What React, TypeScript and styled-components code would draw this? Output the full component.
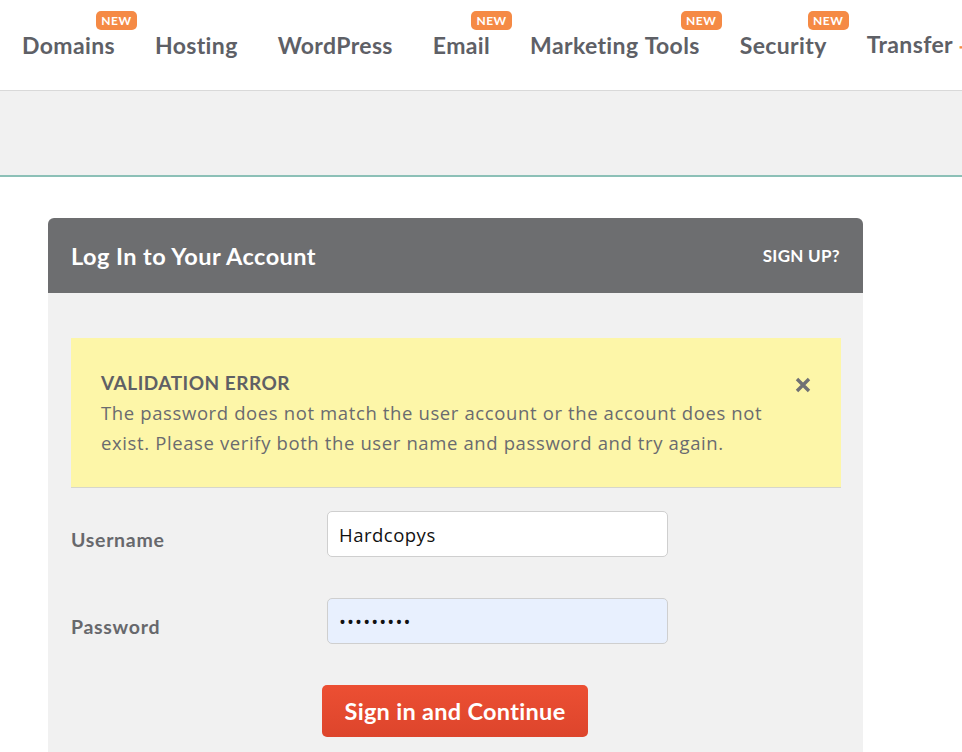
import React from "react";
import styled, { createGlobalStyle } from "styled-components";

const Global = createGlobalStyle`
  html, body { margin: 0; padding: 0; background: #ffffff; overflow: hidden; }
  body { font-family: "Lato", "Noto Sans", sans-serif; width: 962px; height: 752px; }
  * { box-sizing: border-box; }
`;

const Nav = styled.nav`
  height: 91px;
  border-bottom: 1px solid #d9d9d9;
  background: #fff;
  display: flex;
  align-items: center;
  gap: 40px;
  padding: 0 0 0 22px;
  white-space: nowrap;
  overflow: hidden;
`;

const NavItem = styled.a`
  position: relative;
  font-family: "Lato", sans-serif;
  font-size: 23px;
  font-weight: 700;
  letter-spacing: 0.36px;
  word-spacing: 1px;
  color: #5e6066;
  text-decoration: none;
  line-height: 28px;
  flex-shrink: 0;
`;

const Badge = styled.span`
  position: absolute;
  right: -22px;
  top: -20px;
  width: 41px;
  height: 19px;
  border-radius: 5px;
  background: #f58a45;
  color: #fff;
  font-size: 12px;
  font-weight: 700;
  letter-spacing: 0.5px;
  word-spacing: 0;
  line-height: 19px;
  text-align: center;
`;

const Arrow = styled.span`
  color: #f58a45;
  font-size: 18px;
  margin-left: 6px;
`;

const Band = styled.div`
  height: 86px;
  background: #f1f1f1;
  border-bottom: 2px solid #8cc0b7;
`;

const Main = styled.main`
  padding: 41px 0 0 48px;
`;

const Card = styled.section`
  width: 815px;
`;

const CardHeader = styled.header`
  height: 75px;
  background: #6d6e70;
  border-radius: 6px 6px 0 0;
  display: flex;
  align-items: center;
  justify-content: space-between;
  padding: 0 23px;
  color: #fff;
`;

const CardTitle = styled.h1`
  margin: 0;
  font-size: 23.5px;
  font-weight: 700;
  letter-spacing: 0.45px;
`;

const SignUp = styled.a`
  font-size: 17px;
  font-weight: 700;
  letter-spacing: 0.3px;
  color: #fff;
  text-decoration: none;
`;

const CardBody = styled.div`
  background: #f1f1f1;
  padding: 45px 22px 40px 23px;
  height: 480px;
`;

const Alert = styled.div`
  position: relative;
  background: #fdf6a8;
  border-bottom: 1px solid #d6d6cc;
  padding: 30px 40px 29px 30px;
  color: #5f6065;
`;

const AlertTitle = styled.div`
  font-size: 19px;
  font-weight: 700;
  letter-spacing: 0.5px;
  line-height: 30px;
`;

const AlertText = styled.p`
  margin: 0;
  font-family: "Open Sans", "Noto Sans", sans-serif;
  font-size: 18.5px;
  font-weight: 400;
  line-height: 30px;
  letter-spacing: 0.62px;
  color: #6a6b6f;
  white-space: nowrap;
`;

const Close = styled.button`
  position: absolute;
  right: 30px;
  top: 39px;
  width: 16px;
  height: 16px;
  padding: 0;
  border: 0;
  background: transparent;
  cursor: pointer;
`;

const Form = styled.form`
  display: flex;
  flex-direction: column;
  gap: 41px;
  padding-top: 23px;
`;

const Row = styled.div`
  display: grid;
  grid-template-columns: 256px 341px;
  align-items: center;
`;

const Label = styled.label`
  font-size: 19.5px;
  font-weight: 700;
  letter-spacing: 0.7px;
  color: #67686c;
  padding-top: 10px;
`;

const Input = styled.input<{ $filled?: boolean }>`
  height: 46px;
  width: 341px;
  border: 1px solid #cfcfcf;
  border-radius: 5px;
  background: ${(p) => (p.$filled ? "#e8f0fe" : "#ffffff")};
  padding: 0 11px;
  font-family: "Open Sans", "Noto Sans", sans-serif;
  font-size: 18.5px;
  letter-spacing: ${(p) => (p.$filled ? "1.1px" : "0.5px")};
  color: #111;
  outline: none;
`;

const ButtonRow = styled.div`
  padding-left: 251px;
`;

const Submit = styled.button`
  width: 266px;
  height: 52px;
  border: 0;
  border-radius: 5px;
  background: linear-gradient(#ec4f33, #dd452c);
  color: #fff;
  font-family: "Lato", sans-serif;
  font-size: 23.5px;
  font-weight: 700;
  letter-spacing: 0.3px;
  cursor: pointer;
`;

const navItems: { label: string; isNew?: boolean }[] = [
  { label: "Domains", isNew: true },
  { label: "Hosting" },
  { label: "WordPress" },
  { label: "Email", isNew: true },
  { label: "Marketing Tools", isNew: true },
  { label: "Security", isNew: true },
];

export default function App() {
  return (
    <>
      <Global />
      <Nav>
        {navItems.map((n) => (
          <NavItem key={n.label} href="#">
            {n.label}
            {n.isNew && <Badge>NEW</Badge>}
          </NavItem>
        ))}
        <NavItem href="#">
          Transfer<Arrow>⇢</Arrow>
        </NavItem>
      </Nav>
      <Band />
      <Main>
        <Card>
          <CardHeader>
            <CardTitle>Log In to Your Account</CardTitle>
            <SignUp href="#">SIGN UP?</SignUp>
          </CardHeader>
          <CardBody>
            <Alert>
              <AlertTitle>VALIDATION ERROR</AlertTitle>
              <AlertText>
                The password does not match the user account or the account does not
                <br />
                exist. Please verify both the user name and password and try again.
              </AlertText>
              <Close aria-label="Close">
                <svg width="16" height="16" viewBox="0 0 16 16">
                  <path d="M2 2 L14 14 M14 2 L2 14" stroke="#707174" strokeWidth="3.4" strokeLinecap="butt" />
                </svg>
              </Close>
            </Alert>
            <Form onSubmit={(e) => e.preventDefault()}>
              <Row>
                <Label>Username</Label>
                <Input defaultValue="Hardcopys" />
              </Row>
              <Row>
                <Label>Password</Label>
                <Input type="password" defaultValue="123456789" $filled />
              </Row>
              <ButtonRow>
                <Submit type="submit">Sign in and Continue</Submit>
              </ButtonRow>
            </Form>
          </CardBody>
        </Card>
      </Main>
    </>
  );
}
